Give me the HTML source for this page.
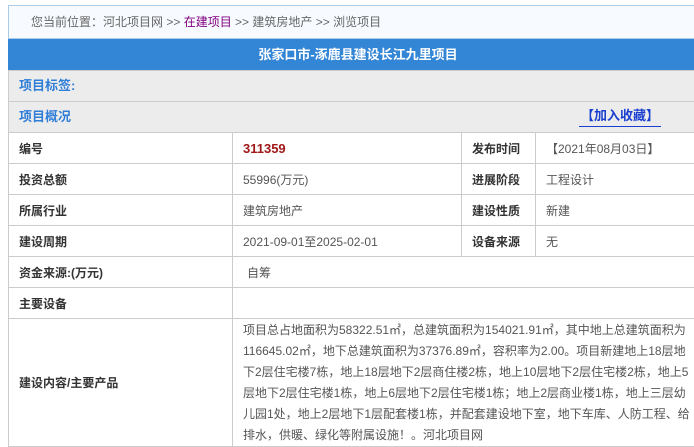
<!DOCTYPE html>
<html><head><meta charset="utf-8"><style>
*{margin:0;padding:0;box-sizing:border-box}
body{width:694px;height:438px;overflow:hidden;background:#fff;font-family:"Liberation Sans","Noto Sans CJK SC",sans-serif;font-size:12px;color:#555;position:relative}
.a{position:absolute}
.crumb{left:8px;top:5px;width:700px;height:34px;background:#f7fbff;border:1px solid #a9cde9;border-right:none;padding:6px 0 0 22px;line-height:20px;color:#666;font-size:12px}
.crumb .p{color:#800080}
.title{left:8px;top:39px;width:700px;height:31px;background:#3385d6;color:#fff;font-weight:bold;font-size:13px;text-align:center;line-height:31px}
.gray{left:8px;width:700px;height:31px;background:#ececec;border-left:1px solid #ccc;border-top:1px solid #ccc;color:#2f7ed8;font-weight:bold;font-size:13px;line-height:29px;padding-left:10px}
.fav{position:absolute;left:570px;top:4px;line-height:20px;color:#1a3fd0;border-bottom:1px solid #1a3fd0;padding:0 2px}
table{position:absolute;left:8px;top:132px;border-collapse:collapse;width:720px}
td{border:1px solid #ccc;height:31px;padding:0 10px;font-size:12px;color:#555;vertical-align:middle}
td.l{font-weight:bold;color:#333;width:224px}
td.l2{font-weight:bold;color:#333;width:74px}
.red{color:#a01818;font-weight:bold;font-size:13px}
td.big{line-height:21px;height:119px;padding-top:1px}
</style></head><body>
<div class="a crumb">您当前位置：河北项目网 &gt;&gt; <span class="p">在建项目</span> &gt;&gt; 建筑房地产 &gt;&gt; 浏览项目</div>
<div class="a title">张家口市-涿鹿县建设长江九里项目</div>
<div class="a gray" style="top:70px">项目标签:</div>
<div class="a gray" style="top:101px">项目概况<span class="fav">【加入收藏】</span></div>
<table>
<tr><td class="l">编号</td><td style="width:229px" class="red">311359</td><td class="l2">发布时间</td><td>【2021年08月03日】</td></tr>
<tr><td class="l">投资总额</td><td>55996(万元)</td><td class="l2">进展阶段</td><td>工程设计</td></tr>
<tr><td class="l">所属行业</td><td>建筑房地产</td><td class="l2">建设性质</td><td>新建</td></tr>
<tr><td class="l">建设周期</td><td>2021-09-01至2025-02-01</td><td class="l2">设备来源</td><td>无</td></tr>
<tr><td class="l">资金来源:(万元)</td><td colspan="3" style="padding-left:14px">自筹</td></tr>
<tr><td class="l">主要设备</td><td colspan="3"></td></tr>
<tr><td class="l">建设内容/主要产品</td><td colspan="3" class="big"><div style="width:452px">项目总占地面积为58322.51㎡，总建筑面积为154021.91㎡，其中地上总建筑面积为116645.02㎡，地下总建筑面积为37376.89㎡，容积率为2.00。项目新建地上18层地下2层住宅楼7栋，地上18层地下2层商住楼2栋，地上10层地下2层住宅楼2栋，地上5层地下2层住宅楼1栋，地上6层地下2层住宅楼1栋；地上2层商业楼1栋，地上三层幼儿园1处，地上2层地下1层配套楼1栋，并配套建设地下室，地下车库、人防工程、给排水，供暖、绿化等附属设施！。河北项目网</div></td></tr>
</table>
</body></html>
